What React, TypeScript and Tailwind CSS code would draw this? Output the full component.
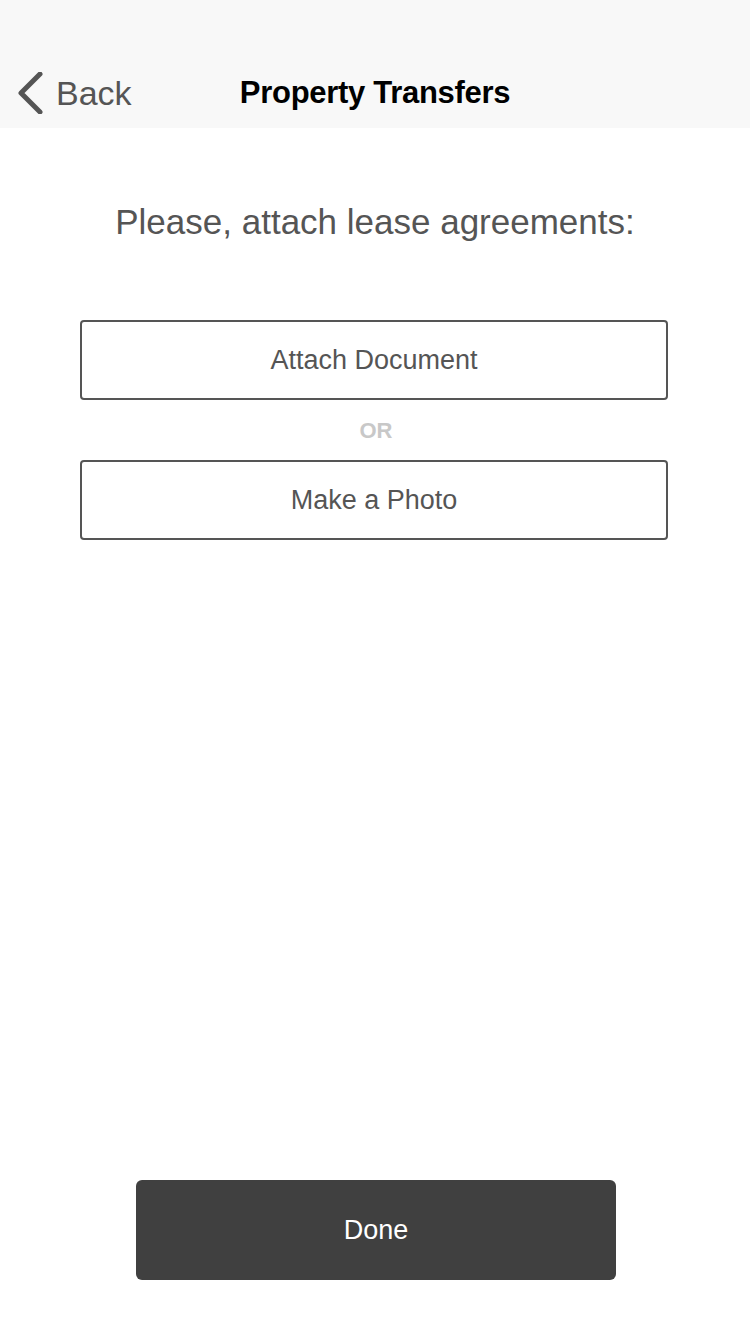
const App = () => {
  return (
    <div className="flex flex-col w-[750px] h-[1334px] bg-white font-['Liberation_Sans',Arial,sans-serif]">
      <div className="relative flex items-center h-[128px] pt-[58px] bg-[#f8f8f8]">
        <div className="absolute left-[17px] top-[72px] flex items-center gap-[13px] text-[#555555]">
          <svg width="26" height="42" viewBox="0 0 26 42" fill="none">
            <path d="M23 2 L4 21 L23 40" stroke="#555555" strokeWidth="5" strokeLinecap="round" strokeLinejoin="round" />
          </svg>
          <span className="text-[34px] leading-none">Back</span>
        </div>
        <div className="w-full text-center text-[31px] font-semibold text-black tracking-[-0.3px]">
          Property Transfers
        </div>
      </div>

      <div className="mt-[74px] leading-[40px] text-center text-[35px] text-[#555555] font-medium">
        Please, attach lease agreements:
      </div>

      <div className="flex flex-col items-center mt-[78px] -translate-x-[1px]">
        <div className="flex items-center justify-center w-[588px] h-[80px] border-2 border-[#555555] rounded-[4px] text-[27px] text-[#555555] font-medium">
          Attach Document
        </div>
        <div className="h-[60px] flex items-center translate-x-[2px] text-[22px] font-bold text-[#c8c8c8]">
          OR
        </div>
        <div className="flex items-center justify-center w-[588px] h-[80px] border-2 border-[#555555] rounded-[4px] text-[27px] text-[#555555] font-medium">
          Make a Photo
        </div>
      </div>

      <div className="flex-1" />

      <div className="flex justify-center mb-[54px] translate-x-[1px]">
        <div className="flex items-center justify-center w-[480px] h-[100px] bg-[#404040] rounded-[6px] text-white text-[27px]">
          Done
        </div>
      </div>
    </div>
  );
};

export default App;
